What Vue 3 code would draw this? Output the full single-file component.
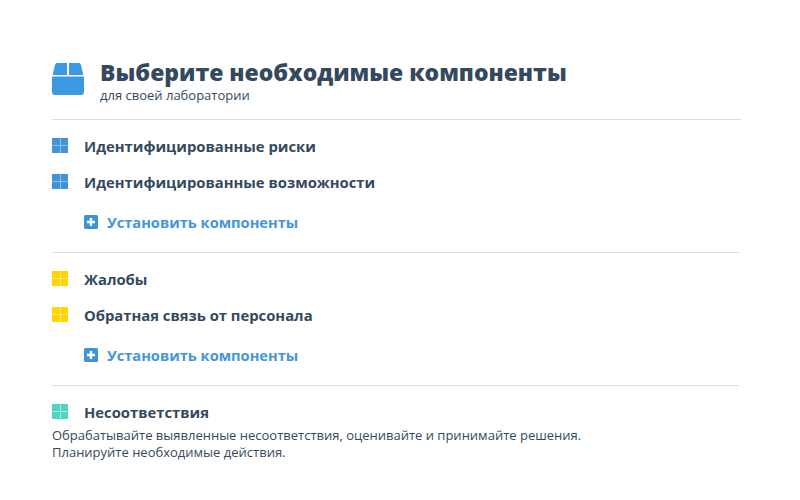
<template>
  <div class="page">
    <header class="head">
      <svg class="box" width="32" height="32" viewBox="0 0 32 32">
        <path d="M5 0H15V12H0.6L3 2Q3.6 0 5 0Z" fill="#3b9ae1" />
        <path d="M17 0H27Q28.4 0 29 2L31.4 12H17Z" fill="#3b9ae1" />
        <path d="M0 13.5H32V29Q32 32 29 32H3Q0 32 0 29Z" fill="#3b9ae1" />
      </svg>
      <div>
        <h1>Выберите необходимые компоненты</h1>
        <p class="sub">для своей лаборатории</p>
      </div>
    </header>

    <section class="group">
      <div class="row" v-for="t in risks" :key="t">
        <span class="grid blue"><i></i><i></i><i></i><i></i></span>
        <span class="name">{{ t }}</span>
      </div>
      <a class="install">
        <svg width="14" height="14" viewBox="0 0 14 14">
          <rect width="14" height="14" rx="1.5" fill="#3f94d6" />
          <path d="M7 3V11M3 7H11" stroke="#fff" stroke-width="2.4" />
        </svg>
        Установить компоненты
      </a>
    </section>

    <section class="group">
      <div class="row" v-for="t in feedback" :key="t">
        <span class="grid yellow"><i></i><i></i><i></i><i></i></span>
        <span class="name">{{ t }}</span>
      </div>
      <a class="install">
        <svg width="14" height="14" viewBox="0 0 14 14">
          <rect width="14" height="14" rx="1.5" fill="#3f94d6" />
          <path d="M7 3V11M3 7H11" stroke="#fff" stroke-width="2.4" />
        </svg>
        Установить компоненты
      </a>
    </section>

    <section class="last">
      <div class="row tight">
        <span class="grid teal"><i></i><i></i><i></i><i></i></span>
        <span class="name">Несоответствия</span>
      </div>
      <p class="desc">Обрабатывайте выявленные несоответствия, оценивайте и принимайте решения.<br />Планируйте необходимые действия.</p>
    </section>
  </div>
</template>

<script setup>
const risks = ['Идентифицированные риски', 'Идентифицированные возможности']
const feedback = ['Жалобы', 'Обратная связь от персонала']
</script>

<style>
body { background: #fff; }
</style>

<style scoped>
.page {
  width: 800px;
  height: 500px;
  box-sizing: border-box;
  padding: 60px 59px 0 52px;
  font-family: "Open Sans", "Noto Sans", sans-serif;
  color: #34495e;
  overflow: hidden;
}
.head {
  display: flex;
  align-items: flex-start;
  gap: 16px;
  height: 60px;
  box-sizing: border-box;
  border-bottom: 1px solid #ddd;
}
.box { flex: none; margin-top: 3px; }
h1 {
  margin: -1px 0 0;
  font-size: 22.9px;
  line-height: 28px;
  font-weight: 800;
}
.sub {
  margin: 0;
  font-size: 13px;
  line-height: 16px;
}
.group {
  width: 687px;
  height: 133px;
  box-sizing: border-box;
  padding-top: 8px;
  border-bottom: 1px solid #ddd;
}
.row {
  display: flex;
  align-items: center;
  height: 36px;
  gap: 16px;
}
.tight { height: 20px; }
.grid {
  flex: none;
  width: 16px;
  height: 15px;
  display: grid;
  grid-template-columns: 1fr 1fr;
  grid-template-rows: 1fr 1fr;
  gap: 1px;
  margin-top: -1px;
}
.grid i { display: block; }
.blue { background: #8fc0e8; }
.blue i { background: #4093d9; }
.yellow { background: #ffe97a; }
.yellow i { background: #ffd400; }
.teal { background: #a5ebe1; }
.teal i { background: #4fd6c4; }
.name {
  font-size: 14.8px;
  font-weight: 700;
}
.install {
  display: flex;
  align-items: center;
  gap: 9px;
  margin: 4px 0 0 32px;
  height: 36px;
  color: #4596d8;
  font-size: 14.65px;
  font-weight: 700;
}
.last { padding-top: 16px; width: 687px; }
.desc {
  margin: 5px 0 0;
  font-size: 13px;
  line-height: 17px;
}
</style>
